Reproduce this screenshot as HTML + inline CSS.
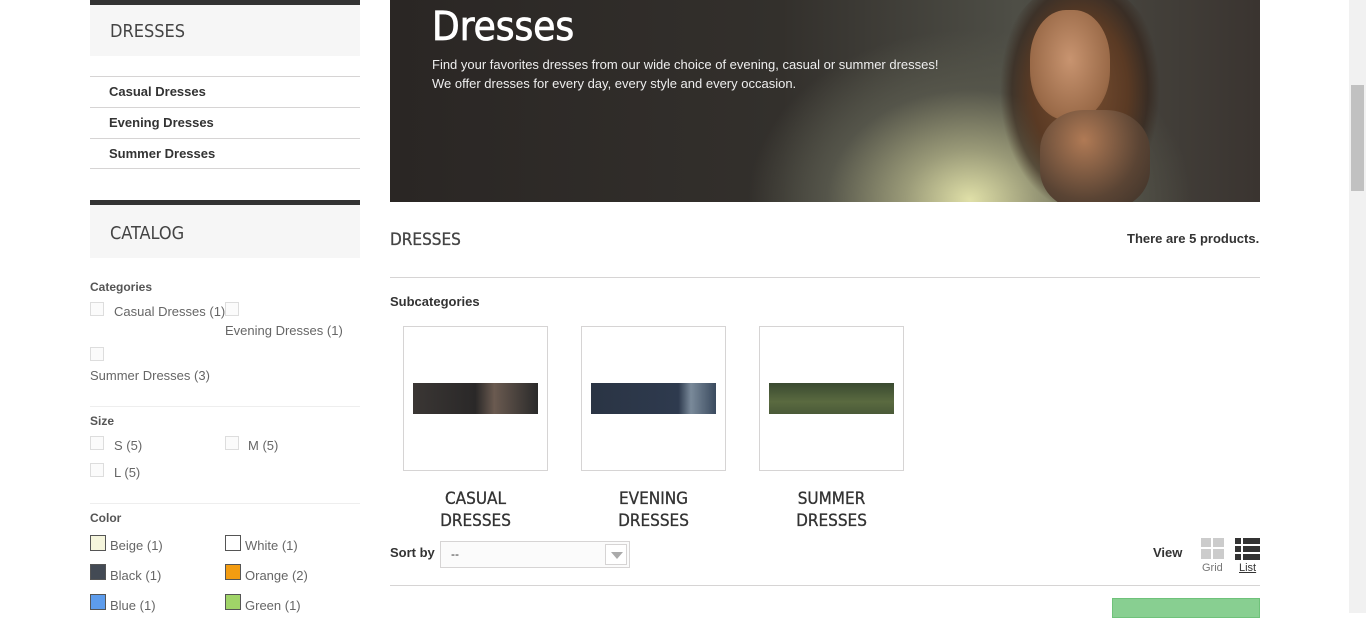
<!DOCTYPE html>
<html><head><meta charset="utf-8"><style>
*{margin:0;padding:0;box-sizing:border-box}
body{width:1366px;height:613px;overflow:hidden;background:#fff;font-family:"Liberation Sans",sans-serif;color:#333;position:relative}
.a{position:absolute}
.h{font-family:"DejaVu Sans Condensed","DejaVu Sans","Liberation Sans",sans-serif}
.blk{left:90px;width:270px;background:#f6f6f6;border-top:5px solid #333}
.blk span{position:absolute;left:20px;font-size:18px;color:#444}
.sub{left:90px;width:270px;height:31px;border-top:1px solid #d6d4d4;font-size:13px;font-weight:bold;padding:7px 19px;color:#333}
.cb{width:14px;height:14px;border:1px solid #ddd;background:#fbfbfb}
.lb{font-size:13px;color:#666}
.sw{width:16px;height:16px;border:1px solid #555}
.ft{font-size:12px;font-weight:bold;color:#555}
.sc{width:145px;height:145px;border:1px solid #d6d4d4}
.st{font-size:17px;color:#333;text-align:center;width:145px;line-height:22px;-webkit-text-stroke:0.3px #333}
</style></head><body>
<div class="a blk" style="top:0;height:56px"><span class="h" style="top:16px">DRESSES</span></div>
<div class="a sub" style="top:76px">Casual Dresses</div>
<div class="a sub" style="top:107px">Evening Dresses</div>
<div class="a sub" style="top:138px;border-bottom:1px solid #d6d4d4">Summer Dresses</div>
<div class="a blk" style="top:200px;height:58px"><span class="h" style="top:18px">CATALOG</span></div>
<div class="a ft" style="left:90px;top:280px">Categories</div>
<div class="a cb" style="left:90px;top:302px"></div><div class="a lb" style="left:114px;top:304px">Casual Dresses (1)</div>
<div class="a cb" style="left:225px;top:302px"></div><div class="a lb" style="left:225px;top:323px">Evening Dresses (1)</div>
<div class="a cb" style="left:90px;top:347px"></div><div class="a lb" style="left:90px;top:368px">Summer Dresses (3)</div>
<div class="a" style="left:90px;top:406px;width:270px;border-top:1px solid #eee"></div>
<div class="a ft" style="left:90px;top:414px">Size</div>
<div class="a cb" style="left:90px;top:436px"></div><div class="a lb" style="left:114px;top:438px">S (5)</div>
<div class="a cb" style="left:225px;top:436px"></div><div class="a lb" style="left:248px;top:438px">M (5)</div>
<div class="a cb" style="left:90px;top:463px"></div><div class="a lb" style="left:114px;top:465px">L (5)</div>
<div class="a" style="left:90px;top:503px;width:270px;border-top:1px solid #eee"></div>
<div class="a ft" style="left:90px;top:511px">Color</div>
<div class="a sw" style="left:90px;top:535px;background:#f5f5dc"></div><div class="a lb" style="left:110px;top:538px">Beige (1)</div>
<div class="a sw" style="left:225px;top:535px;background:#fff"></div><div class="a lb" style="left:245px;top:538px">White (1)</div>
<div class="a sw" style="left:90px;top:564px;background:#434a54"></div><div class="a lb" style="left:110px;top:568px">Black (1)</div>
<div class="a sw" style="left:225px;top:564px;background:#f39c11"></div><div class="a lb" style="left:245px;top:568px">Orange (2)</div>
<div class="a sw" style="left:90px;top:594px;background:#5d9cec"></div><div class="a lb" style="left:110px;top:598px">Blue (1)</div>
<div class="a sw" style="left:225px;top:594px;background:#a0d468"></div><div class="a lb" style="left:245px;top:598px">Green (1)</div>

<div class="a" style="left:390px;top:0;width:870px;height:202px;overflow:hidden;background:radial-gradient(ellipse 260px 200px at 580px 200px,#e0e0a8 0%,#9a9a78 25%,#55554a 55%,transparent 85%),linear-gradient(90deg,#2a2624 0%,#33302c 45%,#4e4e46 72%,#3a3430 100%)">
 <div class="a" style="left:600px;top:-20px;width:180px;height:260px;border-radius:50%;background:radial-gradient(ellipse 80px 120px at 90px 110px,#7a5032 0%,#5a3a24 60%,rgba(50,32,22,.6) 85%,transparent 100%)"></div>
 <div class="a" style="left:640px;top:10px;width:80px;height:110px;border-radius:45%;background:radial-gradient(ellipse at 50% 45%,#c89470,#9a6a48 70%,rgba(120,80,50,0) 100%)"></div>
 <div class="a" style="left:650px;top:110px;width:110px;height:100px;border-radius:40%;background:radial-gradient(ellipse at 40% 30%,#b07a55,#5a4434 60%,#3a3028 100%)"></div>
 <div class="a h" style="left:42px;top:4px;font-size:40px;color:#fff;-webkit-text-stroke:0.8px #fff">Dresses</div>
 <div class="a" style="left:42px;top:55px;font-size:13px;color:#eee;line-height:19px">Find your favorites dresses from our wide choice of evening, casual or summer dresses!<br>We offer dresses for every day, every style and every occasion.</div>
</div>
<div class="a h" style="left:390px;top:230px;font-size:17px;color:#444;-webkit-text-stroke:0.3px #444">DRESSES</div>
<div class="a" style="left:1127px;top:231px;font-size:13px;font-weight:bold">There are 5 products.</div>
<div class="a" style="left:390px;top:277px;width:870px;border-top:1px solid #d6d4d4"></div>
<div class="a" style="left:390px;top:294px;font-size:13px;font-weight:bold">Subcategories</div>
<div class="a sc" style="left:403px;top:326px"><div class="a" style="left:9px;top:56px;width:125px;height:31px;background:linear-gradient(90deg,#3a3634,#2a2828 50%,#6a5a50 65%,#2a2a2a)"></div></div>
<div class="a sc" style="left:581px;top:326px"><div class="a" style="left:9px;top:56px;width:125px;height:31px;background:linear-gradient(90deg,#2a3444,#2e3a4e 70%,#7a8a9a 80%,#3a4a5e)"></div></div>
<div class="a sc" style="left:759px;top:326px"><div class="a" style="left:9px;top:56px;width:125px;height:31px;background:linear-gradient(180deg,#3a4a30,#5a6a40 60%,#4a5a38)"></div></div>
<div class="a st h" style="left:403px;top:488px">CASUAL<br>DRESSES</div>
<div class="a st h" style="left:581px;top:488px">EVENING<br>DRESSES</div>
<div class="a st h" style="left:759px;top:488px">SUMMER<br>DRESSES</div>
<div class="a" style="left:390px;top:545px;font-size:13px;font-weight:bold">Sort by</div>
<div class="a" style="left:440px;top:541px;width:190px;height:27px;border:1px solid #d6d4d4;background:#fbfbfb;font-size:12px;padding:5px 10px">--
 <div class="a" style="right:2px;top:2px;width:22px;height:21px;border:1px solid #d6d4d4;background:#fff"><div class="a" style="left:5px;top:7px;border-left:6px solid transparent;border-right:6px solid transparent;border-top:7px solid #aaa"></div></div></div>
<div class="a" style="left:1153px;top:545px;font-size:13px;font-weight:bold">View</div>
<div class="a" style="left:1201px;top:538px;width:23px;height:21px">
 <div class="a" style="left:0;top:0;width:10px;height:9px;background:#ccc"></div><div class="a" style="left:12px;top:0;width:11px;height:9px;background:#ccc"></div>
 <div class="a" style="left:0;top:11px;width:10px;height:10px;background:#ccc"></div><div class="a" style="left:12px;top:11px;width:11px;height:10px;background:#ccc"></div></div>
<div class="a" style="left:1202px;top:562px;font-size:11px;color:#777">Grid</div>
<div class="a" style="left:1235px;top:538px;width:25px;height:22px">
 <div class="a" style="left:0;top:0;width:6px;height:6px;background:#333"></div><div class="a" style="left:8px;top:0;width:17px;height:6px;background:#333"></div>
 <div class="a" style="left:0;top:8px;width:6px;height:6px;background:#333"></div><div class="a" style="left:8px;top:8px;width:17px;height:6px;background:#333"></div>
 <div class="a" style="left:0;top:16px;width:6px;height:6px;background:#333"></div><div class="a" style="left:8px;top:16px;width:17px;height:6px;background:#333"></div></div>
<div class="a" style="left:1239px;top:562px;font-size:11px;color:#333;text-decoration:underline">List</div>
<div class="a" style="left:390px;top:585px;width:870px;border-top:1px solid #d6d4d4"></div>
<div class="a" style="left:1112px;top:598px;width:148px;height:20px;background:#88cf91;border:1px solid #6fc27a"></div>
<div class="a" style="left:1349px;top:0;width:17px;height:613px;background:#f1f1f1"></div>
<div class="a" style="left:1351px;top:85px;width:13px;height:106px;background:#c1c1c1"></div>
</body></html>
